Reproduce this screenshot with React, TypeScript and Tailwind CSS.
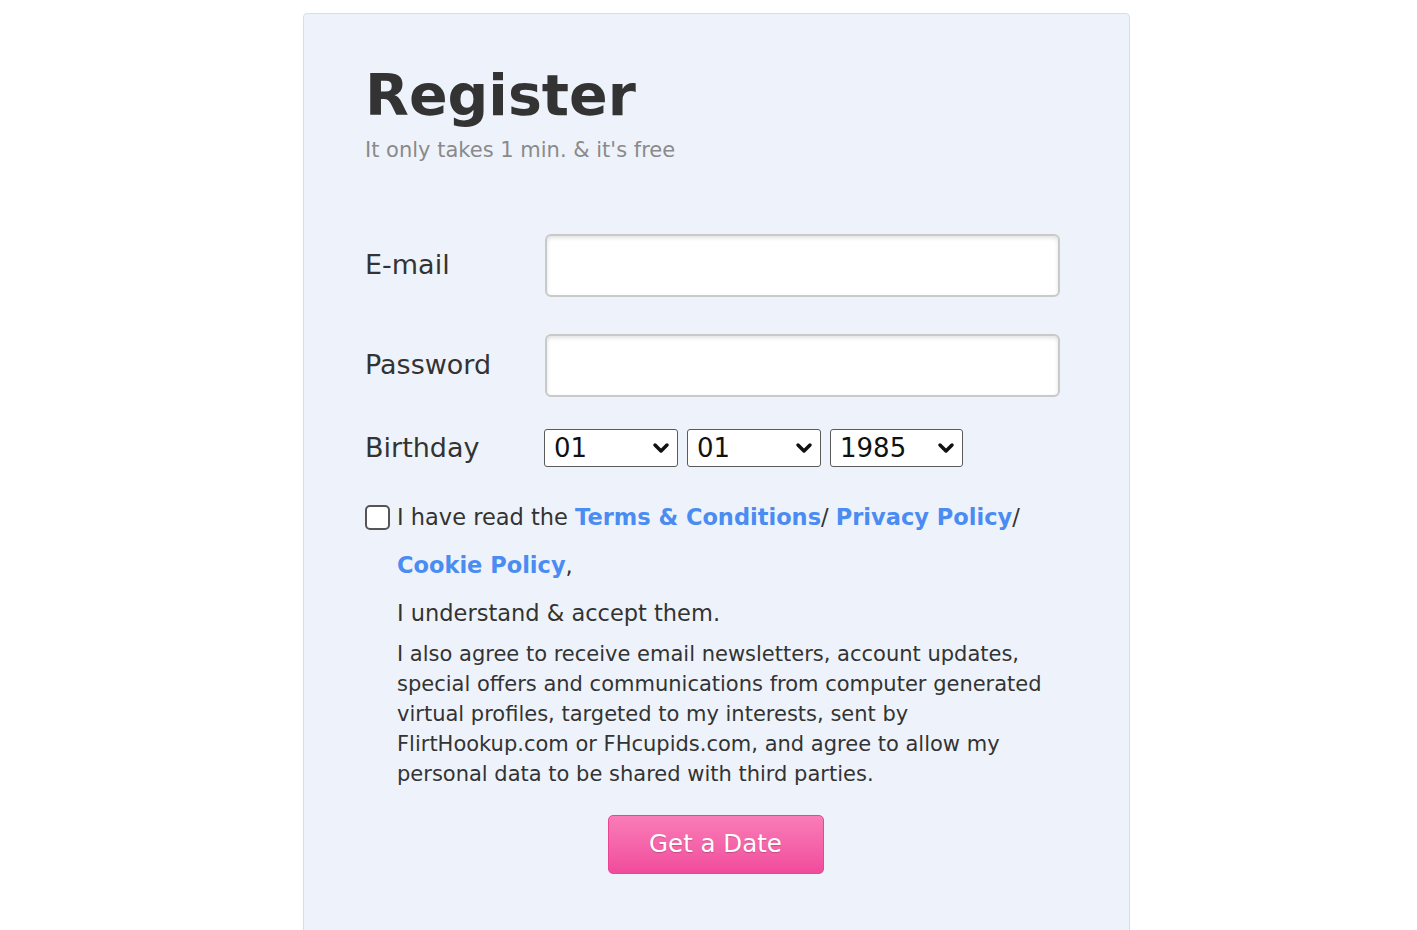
import { ChevronDown } from 'lucide-react';

const font = { fontFamily: '"DejaVu Sans", Verdana, sans-serif' };

const DateSelect = ({ value, options, width }: { value: string; options: string[]; width: string }) => {
    return (
        <div className={`relative ${width}`}>
            <select
                defaultValue={value}
                className="w-full h-[38px] appearance-none bg-white border border-[#5b5b5b] rounded-[3px] pl-[9px] text-[26px] leading-none text-[#111] outline-none"
            >
                {options.map((o) => (
                    <option key={o} value={o}>{o}</option>
                ))}
            </select>
            <ChevronDown className="absolute right-[5px] top-[7px] w-[24px] h-[24px] pointer-events-none text-[#111]" strokeWidth={3.5} />
        </div>
    );
};

const days = Array.from({ length: 31 }, (_, i) => String(i + 1).padStart(2, '0'));
const months = Array.from({ length: 12 }, (_, i) => String(i + 1).padStart(2, '0'));
const years = Array.from({ length: 60 }, (_, i) => String(1960 + i));

const App = () => {
    return (
        <div className="min-h-[930px] bg-white pt-[13px]" style={font}>
            <div className="ml-[303px] w-[827px] min-h-[930px] bg-[#eef3fb] border border-[#cfe0f6] rounded-t-[4px] pl-[61px] pr-[69px] pt-[46px]">
                {/* header */}
                <h1 className="text-[57px] font-bold leading-[70px] text-[#333]">Register</h1>
                <p className="text-[21px] leading-[24px] text-[#8a8a8a] mt-[8px]">It only takes 1 min. &amp; it's free</p>

                {/* fields */}
                <div className="mt-[72px] flex flex-col">
                    <div className="flex items-center h-[63px]">
                        <label className="w-[180px] text-[27px] text-[#333]">E-mail</label>
                        <input type="email" className="w-[515px] h-[63px] bg-white border-2 border-[#c9c9c9] rounded-[6px] shadow-[inset_0_2px_4px_rgba(0,0,0,0.12)] outline-none px-3 text-[22px]" />
                    </div>
                    <div className="flex items-center h-[63px] mt-[37px]">
                        <label className="w-[180px] text-[27px] text-[#333]">Password</label>
                        <input type="password" className="w-[515px] h-[63px] bg-white border-2 border-[#c9c9c9] rounded-[6px] shadow-[inset_0_2px_4px_rgba(0,0,0,0.12)] outline-none px-3 text-[22px]" />
                    </div>
                    <div className="flex items-center h-[38px] mt-[32px]">
                        <label className="w-[179px] text-[27px] text-[#333]">Birthday</label>
                        <div className="flex gap-[9px]">
                            <DateSelect value="01" options={days} width="w-[134px]" />
                            <DateSelect value="01" options={months} width="w-[134px]" />
                            <DateSelect value="1985" options={years} width="w-[133px]" />
                        </div>
                    </div>
                </div>

                {/* terms */}
                <div className="mt-[26px] flex">
                    <input type="checkbox" className="appearance-none w-[25px] h-[25px] mt-[12px] bg-white border-2 border-[#555] rounded-[5px] shrink-0" />
                    <div className="ml-[7px] text-[#333]">
                        <p className="text-[22.5px] leading-[48px]">
                            I have read the <a href="#" className="font-bold text-[#4a8cf2]">Terms &amp; Conditions</a>/ <a href="#" className="font-bold text-[#4a8cf2]">Privacy Policy</a>/ <a href="#" className="font-bold text-[#4a8cf2]">Cookie Policy</a>,
                        </p>
                        <p className="text-[22.5px] leading-[48px]">I understand &amp; accept them.</p>
                        <p className="text-[21px] leading-[30px] mt-[2px]">
                            I also agree to receive email newsletters, account updates, special offers and communications from computer generated virtual profiles, targeted to my interests, sent by FlirtHookup.com or FHcupids.com, and agree to allow my personal data to be shared with third parties.
                        </p>
                    </div>
                </div>

                {/* submit */}
                <div className="flex justify-center mt-[26px] pl-[6px]">
                    <button className="w-[216px] h-[59px] rounded-[5px] border border-[#e94592] bg-gradient-to-b from-[#f97cb8] to-[#f14b9c] text-white text-[24.5px] [text-shadow:0_1px_1px_rgba(0,0,0,0.2)]">
                        Get a Date
                    </button>
                </div>
            </div>
        </div>
    );
};

export default App;
